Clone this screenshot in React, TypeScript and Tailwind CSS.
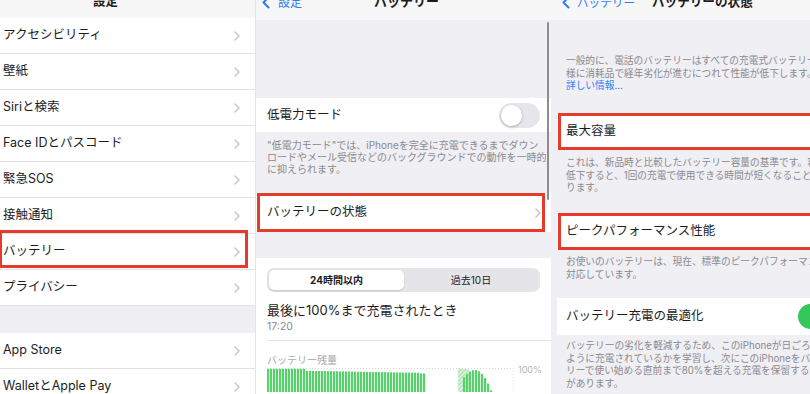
import React from "react";

const Chev = () => (
  <svg width="6" height="10" viewBox="0 0 6 10" className="text-[#c4c4c9] shrink-0">
    <path d="M1 1l4 4-4 4" fill="none" stroke="currentColor" strokeWidth="1.4" strokeLinecap="round" strokeLinejoin="round" />
  </svg>
);

const Back = () => (
  <svg width="8" height="13" viewBox="0 0 8 13" className="text-[#2f7cf6] shrink-0">
    <path d="M6.5 1L1.5 6.5l5 5" fill="none" stroke="currentColor" strokeWidth="2" strokeLinecap="round" strokeLinejoin="round" />
  </svg>
);

const RedBox = ({ cls }: { cls: string }) => (
  <div className={"absolute border-[3px] border-[#e33b2c] pointer-events-none " + cls} />
);

const rows1 = ["アクセシビリティ", "壁紙", "Siriと検索", "Face IDとパスコード", "緊急SOS", "接触通知", "バッテリー", "プライバシー"];
const rows2 = ["App Store", "WalletとApple Pay"];

function Chart() {
  const bars: React.ReactNode[] = [];
  for (let i = 0; i < 53; i++) {
    const x = i * 3;
    let top: number;
    if (x < 38) top = 0.8;
    else if (x < 151) top = 2.8 + ((x - 38) * 2) / 113;
    else top = 5.5;
    bars.push(<rect key={"a" + i} x={x} y={top} width={2.2} height={30 - top} fill="#58d16c" />);
  }
  for (let x = 196; x <= 226; x += 3) {
    const d = x - 207;
    const top = d < 0 ? 2 + 0.06 * d * d : 2 + 0.08 * d * d;
    if (top < 26) bars.push(<rect key={"b" + x} x={x} y={top} width={2.2} height={30 - top} fill="#58d16c" />);
  }
  return (
    <svg width="248" height="24" viewBox="0 0 248 24" className="shrink-0">
      <defs>
        <pattern id="hatch" width="3" height="3" patternUnits="userSpaceOnUse" patternTransform="rotate(45)">
          <rect width="3" height="3" fill="#d3f1d8" />
          <line x1="0" y1="0" x2="0" y2="3" stroke="#8fdc9c" strokeWidth="1.2" />
        </pattern>
      </defs>
      <line x1="0" y1="0.5" x2="246" y2="0.5" stroke="#d6d6d6" strokeDasharray="1 2" />
      <line x1="160" y1="0" x2="160" y2="24" stroke="#e2e2e2" strokeDasharray="1 2" />
      <line x1="191" y1="0" x2="191" y2="24" stroke="#e2e2e2" strokeDasharray="1 2" />
      <line x1="246" y1="0" x2="246" y2="24" stroke="#e2e2e2" strokeDasharray="1 2" />
      <rect x="191" y="1" width="11" height="23" fill="url(#hatch)" />
      {bars}
    </svg>
  );
}

export default function App() {
  return (
    <div className="w-[810px] h-[394px] flex overflow-hidden bg-[#efeff4] font-['Inter','Noto_Sans_CJK_JP',sans-serif] text-[#1c1c1e]">
      {/* Panel 1 */}
      <div className="w-[255px] shrink-0 flex flex-col bg-[#efeff4] overflow-hidden *:shrink-0">
        <div className="h-[18px] bg-[#f7f7f8] overflow-hidden pl-[93px]">
          <div className="mt-[-4px] text-[12.5px] leading-[12px] font-bold">設定</div>
        </div>
        {rows1.map((r) => (
          <div key={r} className="relative h-[36px] bg-white border-b border-[#e2e2e4] flex items-center justify-between pl-[3px] pr-[15px]">
            <span className="text-[12.5px]">{r}</span>
            <Chev />
            {r === "バッテリー" && <RedBox cls="left-[-1px] top-[-4px] h-[38px] w-[249px]" />}
          </div>
        ))}
        <div className="h-[27px]" />
        {rows2.map((r) => (
          <div key={r} className="h-[36px] bg-white border-b border-[#e2e2e4] flex items-center justify-between pl-[3px] pr-[15px]">
            <span className="text-[12.5px]">{r}</span>
            <Chev />
          </div>
        ))}
      </div>

      <div className="w-[1px] shrink-0 bg-[#e4e4e8]" />

      {/* Panel 2 */}
      <div className="relative w-[295px] shrink-0 flex flex-col bg-[#efeff4] overflow-hidden *:shrink-0">
        <div className="h-[20px] bg-[#f7f7f8] overflow-hidden flex items-start pl-[6px]">
          <div className="flex items-center gap-[8px] mt-[-4px] text-[#2f7cf6]">
            <Back />
            <span className="text-[12px] leading-[12px]">設定</span>
          </div>
          <div className="ml-[72px] mt-[-5px] text-[13px] leading-[12px] font-bold">バッテリー</div>
        </div>
        <div className="h-[78px]" />
        <div className="h-[34px] bg-white flex items-center justify-between pl-[11px] pr-[11px]">
          <span className="text-[12.5px]">低電力モード</span>
          <div className="w-[41px] h-[25px] rounded-full bg-[#e6e6ea] p-[2px]">
            <div className="w-[21px] h-[21px] rounded-full bg-white shadow-[0_1px_3px_rgba(0,0,0,0.25)]" />
          </div>
        </div>
        <div className="pt-[7px] px-[11px] text-[10px] leading-[12px] text-[#8a8a8f] whitespace-nowrap">
          <div>"低電力モード"では、iPhoneを完全に充電できるまでダウン</div>
          <div>ロードやメール受信などのバックグラウンドでの動作を一時的</div>
          <div>に抑えられます。</div>
        </div>
        <div className="h-[18px]" />
        <div className="relative h-[39px] bg-white flex items-center justify-between pl-[11px] pr-[10px]">
          <span className="text-[12.5px]">バッテリーの状態</span>
          <Chev />
          <RedBox cls="left-[1px] top-0 bottom-0 right-[6px]" />
        </div>
        <div className="h-[26px]" />
        <div className="h-[140px] bg-white pt-[10px]">
          <div className="mx-[11px] h-[24px] rounded-[7px] bg-[#e4e4e9] p-[2px] flex">
            <div className="w-[135px] rounded-[5px] bg-white shadow-[0_1px_2px_rgba(0,0,0,0.15)] flex items-center justify-center text-[10px] font-bold">24時間以内</div>
            <div className="flex-1 flex items-center justify-center text-[10px]">過去10日</div>
          </div>
          <div className="pl-[11px] mt-[10px] text-[13px] leading-[16px]">最後に100%まで充電されたとき</div>
          <div className="pl-[11px] mt-[2px] text-[10.5px] leading-[14px] text-[#8a8a8f]">17:20</div>
          <div className="ml-[11px] mt-[6px] border-b border-[#e2e2e4]" />
          <div className="pl-[11px] mt-[13px] text-[10px] leading-[12px] text-[#a8a8ac]">バッテリー残量</div>
          <div className="pl-[11px] mt-[2px] flex items-start">
            <Chart />
            <span className="ml-[3px] mt-[-3px] text-[9px] leading-[10px] text-[#b4b4b8]">100%</span>
          </div>
        </div>
        <div className="absolute left-[291px] top-[22px] w-[2px] h-[178px] rounded-full bg-[#8d8d92]" />
      </div>

      {/* Panel 3 */}
      <div className="w-[259px] shrink-0 flex flex-col bg-[#efeff4] pl-[6px] overflow-hidden *:shrink-0">
        <div className="h-[20px] bg-[#f7f7f8] overflow-hidden flex items-start ml-[-6px] pl-[11px]">
          <div className="flex items-center gap-[7px] mt-[-4px] text-[#2f7cf6]">
            <Back />
            <span className="text-[11.6px] leading-[12px]">バッテリー</span>
          </div>
          <div className="ml-[17px] mt-[-4px] text-[12.6px] leading-[12px] font-bold whitespace-nowrap">バッテリーの状態</div>
        </div>
        <div className="pt-[35px] pl-[9px] text-[9.7px] leading-[12.5px] text-[#8a8a8f] whitespace-nowrap">
          <div>一般的に、電話のバッテリーはすべての充電式バッテリーと同</div>
          <div>様に消耗品で経年劣化が進むにつれて性能が低下します。</div>
          <div className="text-[#2f7cf6]">詳しい情報...</div>
        </div>
        <div className="h-[20.5px]" />
        <div className="relative h-[37px] bg-white flex items-center pl-[9px]">
          <span className="text-[12.5px]">最大容量</span>
          <RedBox cls="left-[1px] top-0 bottom-0 right-[-6px]" />
        </div>
        <div className="pt-[7px] pl-[9px] text-[9.7px] leading-[12.5px] text-[#8a8a8f] whitespace-nowrap">
          <div>これは、新品時と比較したバッテリー容量の基準です。容量が</div>
          <div>低下すると、1回の充電で使用できる時間が短くなることがあ</div>
          <div>ります。</div>
        </div>
        <div className="h-[18.5px]" />
        <div className="relative h-[37px] bg-white flex items-center pl-[9px]">
          <span className="text-[12.5px]">ピークパフォーマンス性能</span>
          <RedBox cls="left-[1px] top-0 bottom-0 right-[-6px]" />
        </div>
        <div className="pt-[6px] pl-[9px] text-[9.7px] leading-[12.5px] text-[#8a8a8f] whitespace-nowrap">
          <div>お使いのバッテリーは、現在、標準のピークパフォーマンスに</div>
          <div>対応しています。</div>
        </div>
        <div className="h-[17px]" />
        <div className="h-[37px] bg-white flex items-center justify-between pl-[9px]">
          <span className="text-[12.5px]">バッテリー充電の最適化</span>
          <div className="w-[41px] h-[25px] rounded-full bg-[#34c759] shrink-0 mr-[-29px]" />
        </div>
        <div className="pt-[5px] pl-[9px] text-[9.7px] leading-[12.5px] text-[#8a8a8f] whitespace-nowrap">
          <div>バッテリーの劣化を軽減するため、このiPhoneが日ごろどの</div>
          <div>ように充電されているかを学習し、次にこのiPhoneをバッテ</div>
          <div>リーで使い始める直前まで80%を超える充電を保留すること</div>
          <div>があります。</div>
        </div>
      </div>
    </div>
  );
}
